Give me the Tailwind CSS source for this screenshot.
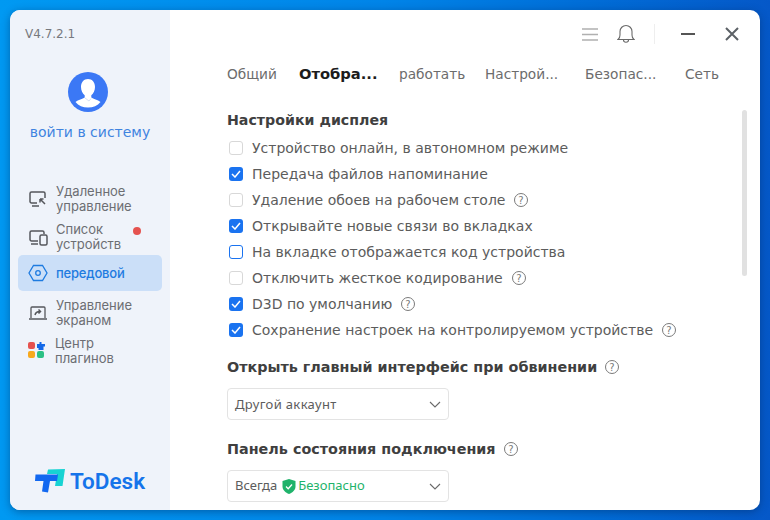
<!DOCTYPE html>
<html lang="ru">
<head>
    <meta charset="UTF-8">
    <title>ToDesk</title>
    <script src="https://cdn.jsdelivr.net/npm/@tailwindcss/browser@4"></script>
</head>
<body class="w-[770px] h-[520px] overflow-hidden p-[10px] bg-gradient-to-r from-[#0099f2] via-[#0084e8] to-[#0558c8] font-['Inter',sans-serif]">
    <div class="flex h-[500px] w-[750px] rounded-[10px] overflow-hidden bg-white shadow-[0_2px_8px_rgba(0,40,90,0.45)]">
        <!-- sidebar -->
        <aside class="w-[160px] shrink-0 bg-[#eff3fa] flex flex-col">
            <div class="pl-[15px] pt-[17px] text-[12px] leading-[14px] text-[#77797e] font-['DejaVu_Sans',sans-serif] h-[31px]">V4.7.2.1</div>
            <div class="flex flex-col items-center mt-[31px]">
                <svg width="40" height="40" viewBox="0 0 40 40" class="mr-[4px]">
                    <circle cx="20" cy="20" r="20" fill="#3b78f5"/>
                    <path d="M20 7c-4.300 0-7 3.300-7 8 0 3.500 1.500 6.500 3.700 8.200v2.300c-2 1.700-6.500 2-9.200 4.500 3 3.700 7.300 5.500 12.500 5.500s9.500-1.800 12.500-5.500c-2.700-2.500-7.200-2.800-9.200-4.500v-2.300c2.200-1.700 3.700-4.700 3.700-8.200 0-4.700-2.700-8-7-8z" fill="#fff"/>
                    <path d="M17 26l4 3 2-2.500" fill="none" stroke="#d5e0f5" stroke-width="1"/>
                </svg>
                <div class="mt-[10px] text-[14px] leading-[20px] text-[#3f84e0] font-['DejaVu_Sans',sans-serif]">войти в систему</div>
            </div>
            <nav class="mt-[38px] px-[8px] flex flex-col text-[13px] leading-[15px] text-[#6c6e73]">
                <div class="h-[38px] flex items-center gap-[8px] pl-[10px]">
                    <svg width="20" height="20" viewBox="0 0 20 20" fill="none" stroke="#55575c" stroke-width="1.500"><path d="M9 14H3.500A1.500 1.500 0 0 1 2 12.500v-8A1.500 1.500 0 0 1 3.500 3h12A1.500 1.500 0 0 1 17 4.500V9"/><path d="M4 17h7"/><path d="M12 10l5 5M12 10v3.500M12 10h3.500"/></svg>
                    <div>Удаленное<br>управление</div>
                </div>
                <div class="h-[38px] flex items-center gap-[8px] pl-[10px] relative">
                    <svg width="20" height="20" viewBox="0 0 20 20" fill="none" stroke="#55575c" stroke-width="1.500"><path d="M10 14H3.500A1.500 1.500 0 0 1 2 12.500v-7A1.500 1.500 0 0 1 3.500 4h11A1.500 1.500 0 0 1 16 5.500V7"/><path d="M3 17h7"/><rect x="12" y="8" width="7" height="10" rx="1.500"/></svg>
                    <div>Список<br>устройств</div>
                    <span class="absolute left-[115px] top-[9px] w-[8px] h-[8px] rounded-full bg-[#e5524f]"></span>
                </div>
                <div class="h-[36px] -mt-px flex items-center gap-[8px] pl-[10px] bg-[#cbdff8] rounded-[5px] text-[#1e7be0] font-medium tracking-[-0.2px]">
                    <svg width="20" height="20" viewBox="0 0 20 20" fill="none" stroke="#1e7be0" stroke-width="1.300"><path d="M5.500 2.500h9L19 10l-4.500 7.500h-9L1 10z"/><circle cx="10" cy="10" r="2.300"/></svg>
                    <div>передовой</div>
                </div>
                <div class="h-[38px] mt-[3px] flex items-center gap-[8px] pl-[10px]">
                    <svg width="20" height="20" viewBox="0 0 20 20" fill="none" stroke="#55575c" stroke-width="1.300"><path d="M3 15V5a1 1 0 0 1 1-1h12a1 1 0 0 1 1 1v10"/><path d="M1 16h18"/><path d="M7 12c.500-2.500 2-3.500 5-3.500M10.500 6.500l2 2-2 2" stroke-width="1.500"/></svg>
                    <div>Управление<br>экраном</div>
                </div>
                <div class="h-[38px] flex items-center gap-[8px] pl-[10px]">
                    <svg width="19" height="19" viewBox="0 0 19 19">
                        <rect x="0" y="0" width="7" height="7" rx="2" fill="#e5524f"/>
                        <path d="M9 2h2.500V0h2v2H17v2.500h-1.500V8h-5V6H9z" fill="#1368e8"/>
                        <rect x="0" y="9" width="7" height="7" rx="2" fill="#f8a91d"/>
                        <rect x="9" y="9" width="7" height="7" rx="2" fill="#2bc084"/>
                    </svg>
                    <div>Центр<br>плагинов</div>
                </div>
            </nav>
            <div class="mt-auto mb-[17px] flex items-center pl-[25px] gap-[5px]">
                <svg width="30" height="24" viewBox="0 0 30 24">
                    <path d="M13 0.500L30 0 27.500 17H20L22 5H12z" fill="#17d3d3"/>
                    <path d="M0.500 5.500H23L22 12H15L13 23.500 7 22.500 8.500 12H0z" fill="#1268f0"/>
                </svg>
                <span class="text-[22.500px] leading-[24px] font-semibold text-[#1574ea] font-['Roboto',sans-serif]">ToDesk</span>
            </div>
        </aside>

        <!-- main -->
        <main class="flex-1 min-w-0 flex flex-col relative">
            <div class="h-[48px] flex items-center justify-end shrink-0">
                <svg width="16" height="13" viewBox="0 0 16 13" stroke="#b0b0b0" stroke-width="1.500" class="mr-[19px]"><path d="M0 1h16M0 6.500h16M0 12h16"/></svg>
                <svg width="18" height="20" viewBox="0 0 18 20" fill="none" stroke="#6a6a6a" stroke-width="1.100" class="mr-[19px]"><path d="M1 15.500c1.500-1 2-2 2-4.500V7.500a6 6 0 0 1 12 0V11c0 2.500.500 3.500 2 4.500z"/><path d="M6.500 16c0 3 5 3 5 0"/></svg>
                <span class="w-px h-[20px] bg-[#eeeeee] mr-[26px]"></span>
                <span class="w-[14px] h-[2px] bg-[#555555] mr-[30px]"></span>
                <svg width="14" height="14" viewBox="0 0 14 14" stroke="#5c6166" stroke-width="2" class="mr-[21px]"><path d="M1 1l12 12M13 1L1 13"/></svg>
            </div>
            <div class="h-[36px] relative text-[13.700px] leading-[20px] text-[#6c6c6c] font-['DejaVu_Sans',sans-serif]">
                <span class="absolute left-[57px] top-[6px]">Общий</span>
                <span class="absolute left-[129px] top-[6px] text-[14.700px] font-bold text-[#1c1c1c]">Отобра...</span>
                <span class="absolute left-[229px] top-[6px]">работать</span>
                <span class="absolute left-[315px] top-[6px]">Настрой...</span>
                <span class="absolute left-[415px] top-[6px]">Безопас...</span>
                <span class="absolute left-[515px] top-[6px]">Сеть</span>
            </div>
            <div class="pl-[57px] pr-[10px] flex-1 overflow-hidden pt-[16px]">
                <h3 class="text-[14.200px] leading-[20px] font-bold text-[#3f3f3f] font-['DejaVu_Sans',sans-serif]">Настройки дисплея</h3>
                <div class="mt-[5px] flex flex-col text-[14px] leading-[26px] text-[#5c5c5c] font-['DejaVu_Sans',sans-serif]">
                    <label class="h-[26px] flex items-center gap-[9px]"><span class="w-[14px] h-[14px] ml-[2px] rounded-[3px] border border-[#d8d8d8]"></span>Устройство онлайн, в автономном режиме</label>
                    <label class="h-[26px] flex items-center gap-[9px]"><span class="w-[14px] h-[14px] ml-[2px] rounded-[3px] bg-[#1a73f0] flex items-center justify-center"><svg width="10" height="8" viewBox="0 0 10 8" fill="none" stroke="#fff" stroke-width="1.500"><path d="M1 4l3 3 5-6"/></svg></span>Передача файлов напоминание</label>
                    <label class="h-[26px] flex items-center gap-[9px]"><span class="w-[14px] h-[14px] ml-[2px] rounded-[3px] border border-[#d8d8d8]"></span>Удаление обоев на рабочем столе
                        <svg width="14" height="14" viewBox="0 0 14 14" fill="none" stroke="#7a7a7a"><circle cx="7" cy="7" r="6.500"/><text x="7" y="10.500" text-anchor="middle" font-size="10" fill="#7a7a7a" stroke="none">?</text></svg></label>
                    <label class="h-[26px] flex items-center gap-[9px]"><span class="w-[14px] h-[14px] ml-[2px] rounded-[3px] bg-[#1a73f0] flex items-center justify-center"><svg width="10" height="8" viewBox="0 0 10 8" fill="none" stroke="#fff" stroke-width="1.500"><path d="M1 4l3 3 5-6"/></svg></span>Открывайте новые связи во вкладках</label>
                    <label class="h-[26px] flex items-center gap-[9px]"><span class="w-[14px] h-[14px] ml-[2px] rounded-[3px] border border-[#1a73f0]"></span>На вкладке отображается код устройства</label>
                    <label class="h-[26px] flex items-center gap-[9px]"><span class="w-[14px] h-[14px] ml-[2px] rounded-[3px] border border-[#d8d8d8]"></span>Отключить жесткое кодирование
                        <svg width="14" height="14" viewBox="0 0 14 14" fill="none" stroke="#7a7a7a"><circle cx="7" cy="7" r="6.500"/><text x="7" y="10.500" text-anchor="middle" font-size="10" fill="#7a7a7a" stroke="none">?</text></svg></label>
                    <label class="h-[26px] flex items-center gap-[9px]"><span class="w-[14px] h-[14px] ml-[2px] rounded-[3px] bg-[#1a73f0] flex items-center justify-center"><svg width="10" height="8" viewBox="0 0 10 8" fill="none" stroke="#fff" stroke-width="1.500"><path d="M1 4l3 3 5-6"/></svg></span>D3D по умолчанию
                        <svg width="14" height="14" viewBox="0 0 14 14" fill="none" stroke="#7a7a7a"><circle cx="7" cy="7" r="6.500"/><text x="7" y="10.500" text-anchor="middle" font-size="10" fill="#7a7a7a" stroke="none">?</text></svg></label>
                    <label class="h-[26px] flex items-center gap-[9px]"><span class="w-[14px] h-[14px] ml-[2px] rounded-[3px] bg-[#1a73f0] flex items-center justify-center"><svg width="10" height="8" viewBox="0 0 10 8" fill="none" stroke="#fff" stroke-width="1.500"><path d="M1 4l3 3 5-6"/></svg></span>Сохранение настроек на контролируемом устройстве
                        <svg width="14" height="14" viewBox="0 0 14 14" fill="none" stroke="#7a7a7a"><circle cx="7" cy="7" r="6.500"/><text x="7" y="10.500" text-anchor="middle" font-size="10" fill="#7a7a7a" stroke="none">?</text></svg></label>
                </div>
                <h3 class="mt-[14px] flex items-center gap-[8px] text-[14.350px] leading-[20px] font-bold text-[#3f3f3f] font-['DejaVu_Sans',sans-serif]">Открыть главный интерфейс при обвинении
                    <svg width="14" height="14" viewBox="0 0 14 14" fill="none" stroke="#7a7a7a"><circle cx="7" cy="7" r="6.500"/><text x="7" y="10.500" text-anchor="middle" font-size="10" font-weight="400" fill="#7a7a7a" stroke="none">?</text></svg></h3>
                <div class="mt-[11px] w-[222px] h-[32px] border border-[#e3e3e3] rounded-[4px] flex items-center justify-between pl-[7px] pr-[7px] text-[13px] text-[#5c5c5c] font-['Noto_Sans',sans-serif]">
                    <span class="tracking-[0.35px] pt-px">Другой аккаунт</span>
                    <svg width="12" height="7" viewBox="0 0 12 7" fill="none" stroke="#6a6a6a" stroke-width="1.100"><path d="M1 1l5 5 5-5"/></svg>
                </div>
                <h3 class="mt-[19px] flex items-center gap-[8px] text-[14.350px] leading-[20px] font-bold text-[#3f3f3f] font-['DejaVu_Sans',sans-serif]">Панель состояния подключения
                    <svg width="14" height="14" viewBox="0 0 14 14" fill="none" stroke="#7a7a7a"><circle cx="7" cy="7" r="6.500"/><text x="7" y="10.500" text-anchor="middle" font-size="10" font-weight="400" fill="#7a7a7a" stroke="none">?</text></svg></h3>
                <div class="mt-[11px] w-[222px] h-[32px] border border-[#e3e3e3] rounded-[4px] flex items-center pl-[7px] pr-[7px] text-[13px] text-[#5c5c5c] font-['Noto_Sans',sans-serif]">
                    <span>Всегда</span>
                    <svg width="14" height="15" viewBox="0 0 14 15" class="ml-[5px]"><path d="M7 0l6.500 2v5.500c0 3.500-3 6-6.500 7.500C3.500 13.500.5 11 .5 7.500V2z" fill="#1fb36b"/><path d="M4 7.500l2.200 2.200L10 5.500" fill="none" stroke="#fff" stroke-width="1.300"/></svg>
                    <span class="ml-[2px] text-[#1fb36b]">Безопасно</span>
                    <svg width="12" height="7" viewBox="0 0 12 7" fill="none" stroke="#6a6a6a" stroke-width="1.100" class="ml-auto"><path d="M1 1l5 5 5-5"/></svg>
                </div>
            </div>
            <div class="absolute right-[13px] top-[100px] w-[5px] h-[166px] rounded-full bg-[#e1e1e1]"></div>
        </main>
    </div>
</body>
</html>
